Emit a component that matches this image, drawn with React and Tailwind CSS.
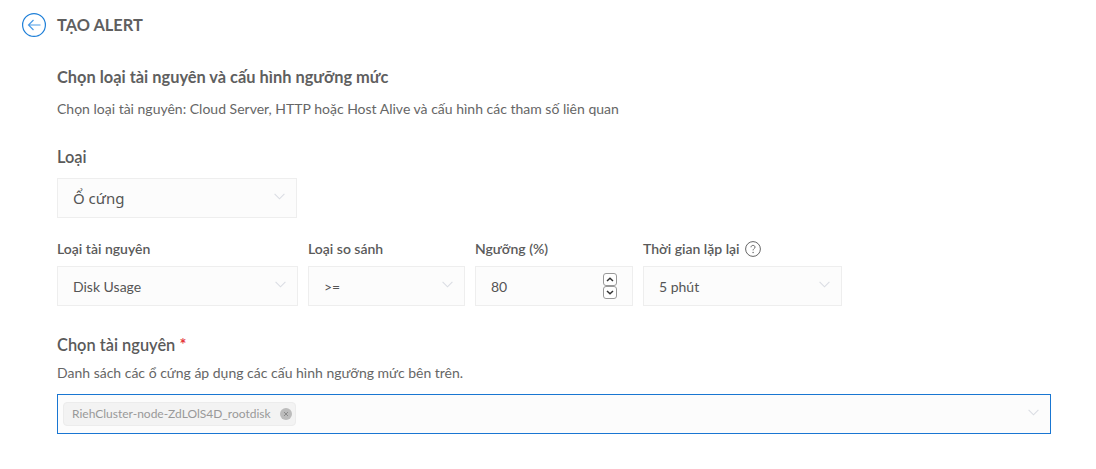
import React from "react";

function Chevron({ className }) {
  return (
    <svg className={className} width="11" height="7" viewBox="0 0 11 7" fill="none">
      <path d="M0.6 0.8L5.5 5.8L10.4 0.8" stroke="#dadde3" strokeWidth="1.1" />
    </svg>
  );
}

function SelectBox({ value, width }) {
  return (
    <div className={`${width} h-10 flex items-center justify-between pl-[15px] pr-[11px] bg-[#fcfcfc] border border-[#eeeeee] text-sm text-[#555555]`}>
      <span className="mt-px">{value}</span>
      <Chevron className="-mt-1" />
    </div>
  );
}

function Label({ children }) {
  return <div className="h-5 leading-5 text-sm font-semibold text-[#5a5a5a]">{children}</div>;
}

export default function App() {
  return (
    <div className="w-[1096px] h-[469px] overflow-hidden bg-white font-['Lato',sans-serif] text-[#555555]">
      {/* Header */}
      <div className="flex items-center h-6 mt-[13px] ml-[22px]">
        <svg width="24" height="24" viewBox="0 0 24 24" fill="none" stroke="#1e7fd8">
          <circle cx="12" cy="12" r="11.4" strokeWidth="1.2" />
          <path d="M18.5 12H6.5M11.5 7L6.5 12L11.5 17" strokeWidth="1.2" stroke="#4a9be6" />
        </svg>
        <h1 className="ml-[11px] text-[16.4px] font-bold text-[#5f5f5f]">TẠO ALERT</h1>
      </div>

      <div className="ml-[57px] w-[994px]">
        <h2 className="mt-[28px] h-[24px] leading-6 text-[16.4px] font-bold text-[#5f5f5f]">
          Chọn loại tài nguyên và cấu hình ngưỡng mức
        </h2>
        <p className="mt-[10px] h-5 leading-5 text-sm text-[#666666]">
          Chọn loại tài nguyên: Cloud Server, HTTP hoặc Host Alive và cấu hình các tham số liên quan
        </p>

        <div className="mt-[26px] h-6 leading-6 text-[16.4px] font-semibold text-[#5a5a5a]">Loại</div>
        <div className="mt-[9px]">
          <SelectBox value={<span className="font-['Noto_Sans',sans-serif] text-[15px] leading-5">Ổ cứng</span>} width="w-[240px]" />
        </div>

        {/* Threshold settings */}
        <div className="mt-[21px] flex gap-[10px]">
          <div className="w-[241px]">
            <Label>Loại tài nguyên</Label>
            <div className="mt-[7px]">
              <SelectBox value="Disk Usage" width="w-full" />
            </div>
          </div>
          <div className="w-[157px]">
            <Label>Loại so sánh</Label>
            <div className="mt-[7px]">
              <SelectBox value=">=" width="w-full" />
            </div>
          </div>
          <div className="w-[158px]">
            <Label>Ngưỡng (%)</Label>
            <div className="mt-[7px] h-10 flex items-center justify-between pl-[15px] pr-[15px] bg-[#fcfcfc] border border-[#eeeeee] text-sm text-[#555555]">
              <span className="mt-px">80</span>
              <div className="flex flex-col">
                <div className="w-[14px] h-[13px] flex items-center justify-center bg-white border border-[#999999] rounded-[3px]">
                  <svg width="8" height="5" viewBox="0 0 8 5" fill="none">
                    <path d="M1 4L4 1.2L7 4" stroke="#333333" strokeWidth="1.5" />
                  </svg>
                </div>
                <div className="w-[14px] h-[13px] flex items-center justify-center bg-white border border-[#999999] rounded-[3px]">
                  <svg width="8" height="5" viewBox="0 0 8 5" fill="none">
                    <path d="M1 1L4 3.8L7 1" stroke="#333333" strokeWidth="1.5" />
                  </svg>
                </div>
              </div>
            </div>
          </div>
          <div className="w-[199px]">
            <div className="flex items-center">
              <Label>Thời gian lặp lại</Label>
              <svg className="ml-[5px]" width="16" height="16" viewBox="0 0 16 16" fill="none">
                <circle cx="8" cy="8" r="7.4" stroke="#666666" strokeWidth="1" />
                <path d="M6 6.3C6 5.1 6.9 4.4 8 4.4C9.1 4.4 10 5.1 10 6.2C10 7.5 8.1 7.7 8.1 9.4" stroke="#666666" strokeWidth="1" />
                <circle cx="8.1" cy="11.5" r="0.7" fill="#666666" />
              </svg>
            </div>
            <div className="mt-[7px]">
              <SelectBox value="5 phút" width="w-full" />
            </div>
          </div>
        </div>

        {/* Resource picker */}
        <div className="mt-[27px] h-6 leading-6 text-[16.4px] font-semibold text-[#5a5a5a]">
          Chọn tài nguyên <span className="text-[#e5383b]">*</span>
        </div>
        <p className="mt-[6px] h-5 leading-5 text-sm text-[#666666]">
          Danh sách các ổ cứng áp dụng các cấu hình ngưỡng mức bên trên.
        </p>
        <div className="mt-[11px] h-10 flex items-center justify-between pl-[5px] pr-[11px] bg-[#fcfcfc] border border-[#1976d2]">
          <div className="h-6 flex items-center pl-2 pr-[3px] bg-[#f3f3f3] border border-[#ececec] rounded text-xs text-[#999999]">
            <span>RiehCluster-node-ZdLOlS4D_rootdisk</span>
            <span className="ml-[9px] w-3 h-3 flex items-center justify-center rounded-full bg-[#bcbcbc]">
              <svg width="6" height="6" viewBox="0 0 6 6" fill="none">
                <path d="M1 1L5 5M5 1L1 5" stroke="#8a8a8a" strokeWidth="1" />
              </svg>
            </span>
          </div>
          <Chevron className="-mt-1" />
        </div>
      </div>
    </div>
  );
}
